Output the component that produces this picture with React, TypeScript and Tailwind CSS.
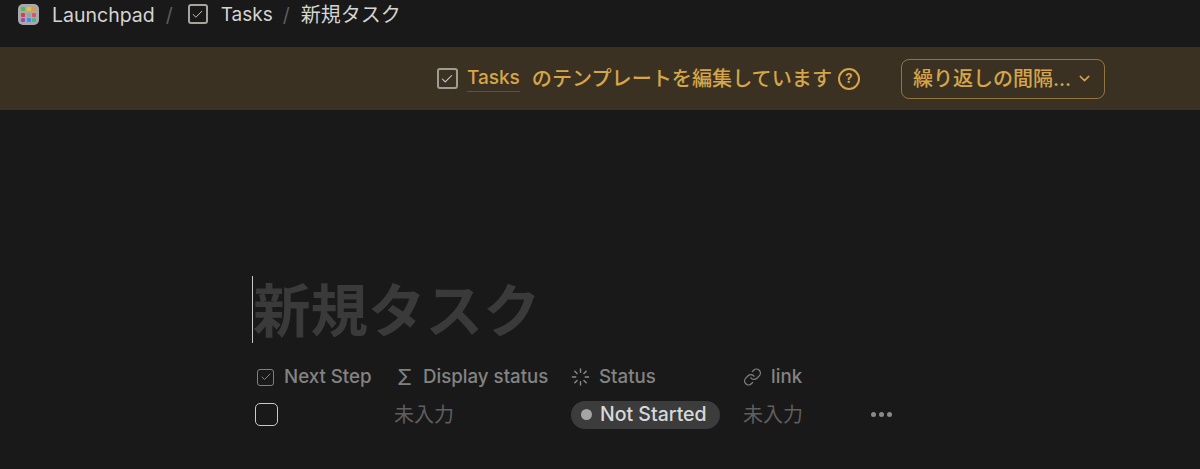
import * as React from 'react';
import { Check, ChevronDown, Link } from 'lucide-react';

const font = "font-['Inter','Noto_Sans_CJK_JP',sans-serif]";

function CheckIcon({ className, check }: { className: string; check: string }) {
  return (
    <span className={`flex items-center justify-center ${className}`}>
      <Check className={check} strokeWidth={1.8} />
    </span>
  );
}

function LaunchpadIcon() {
  const dots = ['#57b947', '#e3c23d', '#e8963a', '#d8403c', '#9aa0a6', '#e2505c', '#8a4fd0', '#3f8fe0', '#45b89a'];
  return (
    <span className="grid h-[21px] w-[21px] grid-cols-3 content-center justify-center gap-[1.5px] rounded-[5px] bg-[#a9a9a9] px-[3px]">
      {dots.map((c, i) => (
        <span key={i} className="h-[4px] w-[4px] rounded-[1px]" style={{ backgroundColor: c }} />
      ))}
    </span>
  );
}

function SpinnerIcon() {
  return (
    <svg width="20" height="20" viewBox="0 0 20 20" stroke="#8a8a8a" strokeWidth="1.5" strokeLinecap="round">
      <path d="M10 1.5v3.5M10 15v3.5M1.5 10H5M15 10h3.5M4 4l2.4 2.4M13.6 13.6 16 16M16 4l-2.4 2.4M6.4 13.6 4 16" />
    </svg>
  );
}

function PropHead({ icon, label }: { icon: React.ReactNode; label: string }) {
  return (
    <div className="flex items-center gap-[9px] text-[18.7px] font-medium leading-[24px] text-[#838383]">
      <span className="flex w-[19px] justify-center">{icon}</span>
      <span>{label}</span>
    </div>
  );
}

export default function App() {
  return (
    <div className={`h-[469px] w-[1200px] overflow-hidden bg-[#191919] ${font}`}>
      <div className="flex h-[47px] items-start pl-[18px] pt-[4px] text-[19.5px] leading-[22px] text-[#d4d4d4]">
        <LaunchpadIcon />
        <span className="ml-[13px]">Launchpad</span>
        <span className="ml-[11px] text-[#5d5d5d]">/</span>
        <CheckIcon className="ml-[15px] h-[20px] w-[20px] rounded-[3px] border-2 border-[#a8a49c]" check="h-[13px] w-[13px] text-[#c9c9c9]" />
        <span className="ml-[13px] text-[19px]">Tasks</span>
        <span className="ml-[10px] text-[#5d5d5d]">/</span>
        <span className="ml-[11px] text-[20px]">新規タスク</span>
      </div>

      <div className="flex h-[63px] items-center justify-end bg-[#3a3123] pr-[95px] text-[19px] font-medium text-[#d6a548]">
        <CheckIcon className="mr-[9px] h-[21px] w-[21px] rounded-[3px] border-2 border-[#a19c92]" check="h-[14px] w-[14px] text-[#d4d4d4]" />
        <span className="mr-[12px] border-b border-[#5d5345] leading-[26px]">Tasks</span>
        <span className="text-[20.1px] leading-[28px]">のテンプレートを編集しています</span>
        <span className="ml-[6px] flex h-[22px] w-[22px] items-center justify-center rounded-full border-2 border-[#d6a548] text-[13px] font-bold">?</span>
        <button className="ml-[41px] flex h-[40px] w-[204px] items-center justify-center gap-[5px] rounded-[8px] border-[1.5px] border-[#937540] text-[20px] text-[#d6a548]">
          <span>繰り返しの間隔...</span>
          <ChevronDown className="h-[17px] w-[17px]" strokeWidth={2} />
        </button>
      </div>

      <div className="pl-[252px] pt-[166px]">
        <div className="flex h-[67px] items-center">
          <span className="h-[67px] w-[1px] bg-[#c8c8c8]" />
          <span className="pt-[4px] text-[57.5px] font-bold leading-[67px] text-[#3a3a3a]">新規タスク</span>
        </div>

        <div className="mt-[22px] grid grid-cols-[139px_176px_172px_149px] items-center gap-y-[11px] pl-[4px]">
          <PropHead
            icon={<CheckIcon className="h-[17px] w-[17px] rounded-[3px] border-[1.5px] border-[#808080]" check="h-[12px] w-[12px] text-[#909090]" />}
            label="Next Step"
          />
          <PropHead icon={<span className="text-[22px] font-normal leading-none text-[#808080]">Σ</span>} label="Display status" />
          <PropHead icon={<SpinnerIcon />} label="Status" />
          <PropHead icon={<Link className="h-[20px] w-[20px] text-[#808080]" strokeWidth={1.6} />} label="link" />

          <div className="flex h-[29px] items-center">
            <span className="-ml-[1px] h-[23px] w-[23px] rounded-[5px] border-[1.5px] border-[#c9c9c9]" />
          </div>
          <span className="-ml-[1px] text-[20px] leading-[28px] text-[#5f5f5f]">未入力</span>
          <div>
            <span className="flex h-[28px] w-[149px] items-center gap-[8px] rounded-full bg-[#3c3c3c] pl-[10px] text-[19.5px] font-medium text-[#d8d8d8]">
              <span className="h-[11px] w-[11px] rounded-full bg-[#a5a5a5]" />
              Not Started
            </span>
          </div>
          <div className="flex items-center justify-between">
            <span className="text-[20px] leading-[28px] text-[#5f5f5f]">未入力</span>
            <span className="flex gap-[3px]">
              <span className="h-[5px] w-[5px] rounded-full bg-[#8a8a8a]" />
              <span className="h-[5px] w-[5px] rounded-full bg-[#8a8a8a]" />
              <span className="h-[5px] w-[5px] rounded-full bg-[#8a8a8a]" />
            </span>
          </div>
        </div>
      </div>
    </div>
  );
}
